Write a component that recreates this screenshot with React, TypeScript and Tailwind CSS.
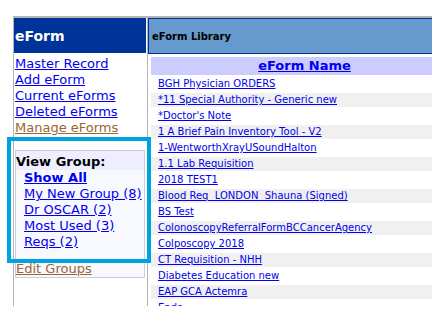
const navLinks = ["Master Record", "Add eForm", "Current eForms", "Deleted eForms"];

const groups = ["My New Group (8)", "Dr OSCAR (2)", "Most Used (3)", "Reqs (2)"];

const forms = [
  "BGH Physician ORDERS",
  "*11 Special Authority - Generic new",
  "*Doctor's Note",
  "1 A Brief Pain Inventory Tool - V2",
  "1-WentworthXrayUSoundHalton",
  "1.1 Lab Requisition",
  "2018 TEST1",
  "Blood Req  LONDON  Shauna (Signed)",
  "BS Test",
  "ColonoscopyReferralFormBCCancerAgency",
  "Colposcopy 2018",
  "CT Requisition - NHH",
  "Diabetes Education new",
  "EAP GCA Actemra",
  "Endo",
];

export default function App() {
  return (
    <div className="relative w-[448px] h-[322px] overflow-hidden bg-white font-['DejaVu_Sans',Verdana,sans-serif]">
      <div className="ml-[13px] mt-[16px] w-[419px] h-[290px] overflow-hidden border-t-2 border-l border-[#b4b4b4] flex">
        {/* left menu */}
        <div className="w-[133px] shrink-0 flex flex-col pr-[1px]">
          <div className="h-[35px] bg-[#003399] flex items-center pl-[1px] pt-[1px] text-[14px] font-bold text-white">
            eForm
          </div>
          <div className="mt-[3px] pl-[1px] flex flex-col text-[13px] leading-[16px]">
            {navLinks.map((l) => (
              <a key={l} href="#" className="text-[#0000ee] underline whitespace-nowrap">
                {l}
              </a>
            ))}
            <a href="#" className="text-[#996633] underline whitespace-nowrap">
              Manage eForms
            </a>
          </div>
          <div className="mt-[14px] ml-[1px] w-[130px] border border-[#ccccdd] bg-[#f8f8ff] flex flex-col text-[13px] leading-[16px]">
            <div className="pt-[3px] bg-[#eeeeff] font-bold text-black">View Group:</div>
            <div className="pl-[8px] flex flex-col">
              <a href="#" className="font-bold text-[#0000ee] underline">
                Show All
              </a>
              {groups.map((g) => (
                <a key={g} href="#" className="text-[#0000ee] underline whitespace-nowrap">
                  {g}
                </a>
              ))}
            </div>
            <a href="#" className="mt-[11px] text-[#996633] underline">
              Edit Groups
            </a>
          </div>
        </div>

        {/* library */}
        <div className="flex-1 overflow-hidden border-l border-[#b4b4b4]">
          <div className="w-[310px] h-[36px] border border-r-0 border-[#003399] bg-[#6699cc] flex items-center pl-[3px] text-[10px] font-bold text-black">
            eForm Library
          </div>
          <div className="w-[310px] pl-[3px] pt-[3px] flex flex-col gap-[2px]">
            <div className="h-[18px] bg-[#ccccff] flex items-center justify-center text-[13px] font-bold">
              <a href="#" className="text-[#0000ee] underline">
                eForm Name
              </a>
            </div>
            {forms.map((f, i) => (
              <div
                key={f}
                className={
                  i % 2 === 1
                    ? "h-[14px] bg-[#f0f0f0] pl-[7px] text-[10px] leading-[14px] whitespace-pre"
                    : "h-[14px] bg-white pl-[7px] text-[10px] leading-[14px] whitespace-pre"
                }
              >
                <a href="#" className="text-[#0000ee] underline">
                  {f}
                </a>
              </div>
            ))}
          </div>
        </div>
      </div>

      {/* highlight over the group box */}
      <div className="absolute left-[7px] top-[137px] w-[144px] h-[126px] border-4 border-[#00a3e0]" />
    </div>
  );
}
